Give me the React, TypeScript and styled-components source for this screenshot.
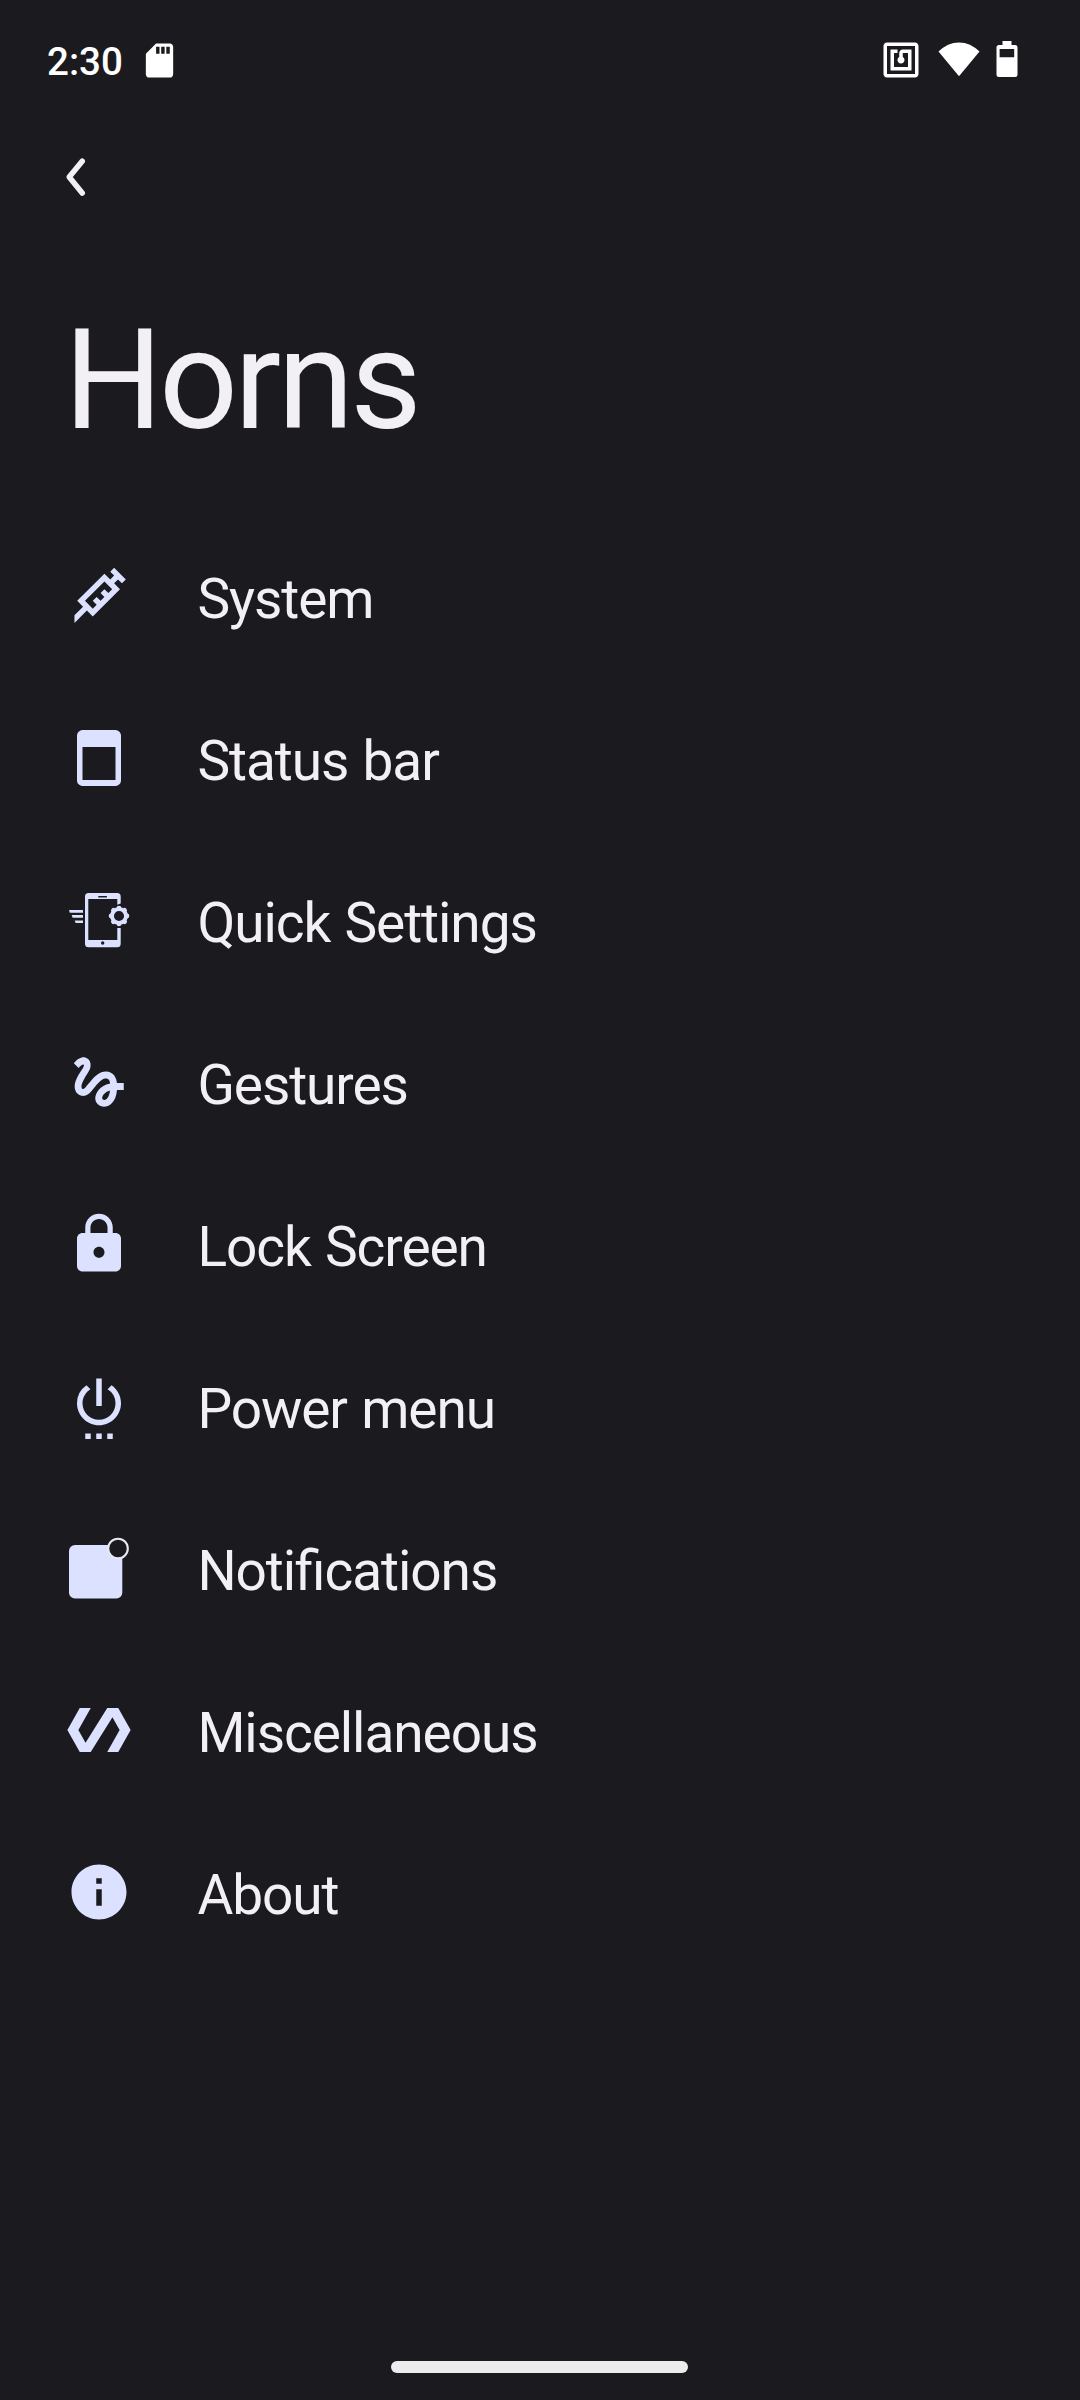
import React from "react";
import styled, { createGlobalStyle } from "styled-components";
import {
  MdGesture,
  MdInfo,
  MdLock,
  MdNfc,
  MdPolymer,
  MdSdCard,
  MdSettingsPower,
} from "react-icons/md";

const GlobalStyle = createGlobalStyle`
  * { box-sizing: border-box; }
  body { margin: 0; background: #1b1b1f; }
`;

const Screen = styled.div`
  display: flex;
  flex-direction: column;
  width: 1080px;
  height: 2400px;
  overflow: hidden;
  background: #1b1b1f;
  color: #f2eff5;
  font-family: Roboto, "Noto Sans", sans-serif;
`;

const StatusBar = styled.header`
  display: flex;
  justify-content: space-between;
  height: 120px;
  padding: 38px 62px 0 47px;
  color: #fff;
`;

const StatusGroup = styled.div<{ $gap: number }>`
  display: flex;
  align-items: center;
  height: 44px;
  gap: ${(p) => p.$gap}px;

  svg {
    display: block;
    flex: none;
  }
`;

const Clock = styled.span`
  width: 75px;
  font-size: 38.5px;
  line-height: 44px;
  padding-top: 3px;
  font-weight: 500;
  white-space: nowrap;
`;

const Toolbar = styled.nav`
  display: flex;
  align-items: center;
  height: 114px;
  padding-left: 60px;
`;

const BackButton = styled.button`
  display: flex;
  padding: 0;
  border: 0;
  background: none;
  color: inherit;
`;

const Title = styled.h1`
  height: 281px;
  margin: 0;
  padding: 65px 0 0 64px;
  font-size: 138.6px;
  line-height: 164px;
  font-weight: 400;
  letter-spacing: -3.8px;
  white-space: nowrap;
`;

const Menu = styled.ul`
  display: flex;
  flex-direction: column;
  flex: 1;
  margin: 0;
  padding: 0;
  list-style: none;
`;

const MenuRow = styled.li`
  display: flex;
  align-items: center;
  height: 162px;
  padding-left: 66px;
`;

const IconSlot = styled.span`
  display: flex;
  width: 131.4px;
  color: #dbe1ff;

  svg {
    display: block;
    width: 66px;
    height: 66px;
  }
`;

const Label = styled.span`
  padding-top: 5px;
  font-size: 55px;
  line-height: 64px;
  letter-spacing: -1.07px;
  word-spacing: 1.7px;
  font-feature-settings: "liga" 1;
  white-space: nowrap;
`;

const NavBar = styled.footer`
  display: flex;
  justify-content: center;
  height: 39px;
  padding-right: 1px;
`;

const HomeHandle = styled.div`
  width: 297px;
  height: 12px;
  border-radius: 6px;
  background: #ececec;
`;

const WifiIcon = () => (
  <svg width="42" height="44" viewBox="0 0 42 44" fill="currentColor">
    <path d="M.5 13.6Q9.5 4.4 21 4.4t20.500 9.200L21 38.300Z" />
  </svg>
);

const BatteryIcon = () => (
  <svg width="22" height="44" viewBox="0 0 22 44" fill="currentColor">
    <path
      fillRule="evenodd"
      d="M6.500 3h9v4H19a2.500 2.500 0 0 1 2.500 2.500v27A2.500 2.500 0 0 1 19 39H3A2.500 2.500 0 0 1 .5 36.500v-27A2.500 2.500 0 0 1 3 7h3.500zM3.600 11v8.300h14.600V11z"
    />
  </svg>
);

const BackIcon = () => (
  <svg width="30" height="44" viewBox="0 0 30 44" fill="none" stroke="currentColor">
    <path d="M22.200 6.200 9.200 22l13 16" strokeWidth="5.600" strokeLinecap="round" strokeLinejoin="round" />
  </svg>
);

const NeedleIcon = () => (
  <svg viewBox="0 0 24 24" fill="currentColor">
    <path d="M11.15 15.18 9.73 13.77l1.42-1.42 1.41 1.42 1.41-1.42-1.41-1.41 1.41-1.41 1.42 1.41L16.8 9.53 13.97 6.700 6.900 13.77l2.830 2.830zM3.080 19l3.120-3.110-2.120-2.120 9.890-9.900L16.100 6l1.400-1.420-1.400-1.420 1.400-1.410L21.750 6l-1.410 1.400L18.920 6 17.500 7.400l2.130 2.130-9.900 9.890-2.120-2.120-4.530 4.540z" />
  </svg>
);

const StatusBarIcon = () => (
  <svg viewBox="0 0 24 24" fill="currentColor">
    <path
      fillRule="evenodd"
      d="M6 1.850h12a2 2 0 0 1 2 2v16.300a2 2 0 0 1-2 2H6a2 2 0 0 1-2-2V3.850a2 2 0 0 1 2-2zM6 8v12h12V8z"
    />
  </svg>
);

const gearTeeth = [0, 45, 90, 135, 180, 225, 270, 315];

const QuickSettingsIcon = () => (
  <svg viewBox="0 0 66 66" fill="currentColor">
    <path d="M3 23h14v2.700H3.800zM5.700 28H17v2.700H6.600zM8.700 33.400H17v2.700H9.600z" />
    <path
      fillRule="evenodd"
      d="M22.600 6h28.500a3.600 3.600 0 0 1 3.600 3.600v7l-3.400 1.200V12h-29v41h29V41h3.400v15.700a3.600 3.600 0 0 1-3.600 3.600H22.600a3.600 3.600 0 0 1-3.600-3.600V9.600A3.600 3.600 0 0 1 22.600 6zm9.700 3v1.400h8.600V9zm4.400 45.300a1.700 1.700 0 1 0 0 3.400 1.700 1.700 0 0 0 0-3.400z"
    />
    <circle cx="53" cy="29" r="7" fill="none" stroke="currentColor" strokeWidth="3.900" />
    {gearTeeth.map((angle) => (
      <circle key={angle} cx="53" cy="21.100" r="2.400" transform={`rotate(${angle} 53 29)`} />
    ))}
  </svg>
);

const NotificationIcon = () => (
  <svg viewBox="0 0 66 66" fill="currentColor">
    <rect x="3" y="10" width="53.300" height="53.500" rx="6" />
    <circle cx="52" cy="13.500" r="9.800" fill="#1b1b1f" stroke="#e6e8f6" strokeWidth="2.100" />
  </svg>
);

const items: { label: string; icon: React.ReactNode }[] = [
  { label: "System", icon: <NeedleIcon /> },
  { label: "Status bar", icon: <StatusBarIcon /> },
  { label: "Quick Settings", icon: <QuickSettingsIcon /> },
  { label: "Gestures", icon: <MdGesture /> },
  { label: "Lock Screen", icon: <MdLock /> },
  { label: "Power menu", icon: <MdSettingsPower /> },
  { label: "Notifications", icon: <NotificationIcon /> },
  { label: "Miscellaneous", icon: <MdPolymer /> },
  { label: "About", icon: <MdInfo /> },
];

export default function App() {
  return (
    <Screen>
      <GlobalStyle />
      <StatusBar>
        <StatusGroup $gap={17}>
          <Clock>2:30</Clock>
          <MdSdCard size={41} />
        </StatusGroup>
        <StatusGroup $gap={16}>
          <MdNfc size={42} />
          <WifiIcon />
          <BatteryIcon />
        </StatusGroup>
      </StatusBar>
      <Toolbar>
        <BackButton aria-label="Back">
          <BackIcon />
        </BackButton>
      </Toolbar>
      <Title>Horns</Title>
      <Menu>
        {items.map((item) => (
          <MenuRow key={item.label}>
            <IconSlot>{item.icon}</IconSlot>
            <Label>{item.label}</Label>
          </MenuRow>
        ))}
      </Menu>
      <NavBar>
        <HomeHandle />
      </NavBar>
    </Screen>
  );
}
